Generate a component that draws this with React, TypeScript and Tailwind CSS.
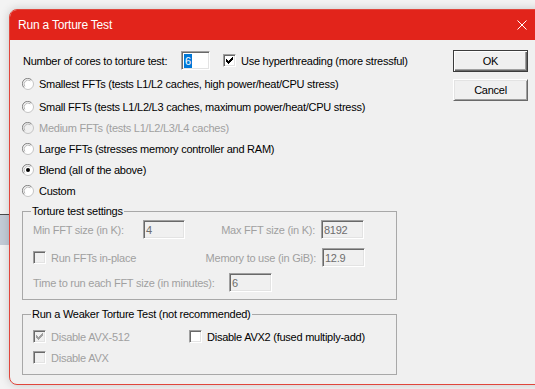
import React from "react";

const CHECK = [
  "......#",
  ".....##",
  "#...###",
  "##.###.",
  "#####..",
  ".###...",
  "..#....",
];

function CheckMark({ color }: { color: string }) {
  const rects: React.ReactNode[] = [];
  CHECK.forEach((row, y) =>
    row.split("").forEach((c, x) => {
      if (c === "#") rects.push(<rect key={`${x}-${y}`} x={x} y={y} width={1} height={1} fill={color} />);
    })
  );
  return (
    <svg width="7" height="7" viewBox="0 0 7 7" shapeRendering="crispEdges">
      {rects}
    </svg>
  );
}

function Checkbox({ checked, disabled }: { checked?: boolean; disabled?: boolean }) {
  return (
    <span
      className={`flex h-[13px] w-[13px] shrink-0 items-center justify-center border border-t-[#a0a0a0] border-l-[#a0a0a0] border-b-white border-r-white shadow-[inset_1px_1px_0_#696969,inset_-1px_-1px_0_#e3e3e3] ${
        disabled ? "bg-[#f0f0f0]" : "bg-white"
      }`}
    >
      {checked && <CheckMark color={disabled ? "#a0a0a0" : "#000"} />}
    </span>
  );
}

function Radio({ checked, disabled }: { checked?: boolean; disabled?: boolean }) {
  return (
    <svg width="12" height="12" viewBox="0 0 12 12" className="shrink-0">
      <circle cx="6" cy="6" r="5.5" fill={disabled ? "#f0f0f0" : "#ffffff"} stroke="#c4c4c4" />
      <path d="M1.9 9.4 A5 5 0 0 1 9.4 1.9" stroke="#8c8c8c" fill="none" strokeWidth="1" />
      <path d="M2.9 8.5 A4 4 0 0 1 8.5 2.9" stroke="#b8b8b8" fill="none" strokeWidth="1" />
      {checked && <circle cx="6" cy="6" r="2" fill="#000" />}
    </svg>
  );
}

function Field({ value, w, disabled, selected }: { value: string; w: string; disabled?: boolean; selected?: boolean }) {
  return (
    <div
      className={`flex h-[19px] ${w} shrink-0 items-center border border-t-[#a0a0a0] border-l-[#a0a0a0] border-b-white border-r-white pl-[2px] shadow-[inset_1px_1px_0_#696969,inset_-1px_-1px_0_#e3e3e3] ${
        disabled ? "bg-[#f0f0f0] text-[#6d6d6d]" : "bg-white text-black"
      }`}
    >
      {selected ? (
        <span className="bg-[#0078d7] px-[1px] pt-[1px] leading-[13px] text-white">{value}</span>
      ) : (
        <span className="pt-[2px] leading-[13px]">{value}</span>
      )}
    </div>
  );
}

function RadioRow({ label, checked, disabled, mt }: { label: string; checked?: boolean; disabled?: boolean; mt?: string }) {
  return (
    <div className={`flex h-[21px] items-center gap-[5px] ${mt ?? ""}`}>
      <Radio checked={checked} disabled={disabled} />
      <span className={`whitespace-nowrap pt-[2px] ${disabled ? "text-[#a0a0a0]" : "text-black"}`}>{label}</span>
    </div>
  );
}

export default function App() {
  return (
    <div className="relative h-[389px] w-[535px] overflow-hidden bg-[#f3f3f3] pl-[9px] pt-[9px] font-['Liberation_Sans',Arial,sans-serif] text-[11px] leading-[13px] tracking-[-0.25px]">
      {/* background window peeking out on the desktop */}
      <div className="absolute left-0 top-[214px] h-[31px] w-[9px] border-t border-[#4a4a4a] bg-[#c3cbd6]" />

      <div className="relative w-[545px] overflow-hidden rounded-[8px] border border-[#e0463c] bg-[#f0f0f0] shadow-[0_0_10px_rgba(0,0,0,0.18)]">
        {/* title bar */}
        <div className="flex h-[30px] items-center justify-between bg-[#e2241b] pl-[8px] pr-[26px] text-white">
          <span className="font-['Liberation_Sans',Arial,sans-serif] text-[12px] tracking-[-0.2px]">Run a Torture Test</span>
          <svg width="10" height="10" viewBox="0 0 10 10">
            <path d="M0.5 0.5 L9.5 9.5 M9.5 0.5 L0.5 9.5" stroke="#ffffff" strokeWidth="1" />
          </svg>
        </div>

        {/* body */}
        <div className="flex h-[344px] pl-[12px]">
          <div className="flex w-[420px] shrink-0 flex-col pt-[11px]">
            <div className="flex h-[19px] items-center">
              <span className="w-[159px] shrink-0 pl-[1px] pt-[2px]">Number of cores to torture test:</span>
              <Field value="6" w="w-[29px]" selected />
              <span className="ml-[13px]">
                <Checkbox checked />
              </span>
              <span className="ml-[5px] whitespace-nowrap pt-[2px]">Use hyperthreading (more stressful)</span>
            </div>

            <RadioRow mt="mt-[3px]" label="Smallest FFTs (tests L1/L2 caches, high power/heat/CPU stress)" />
            <RadioRow mt="mt-[2px]" label="Small FFTs (tests L1/L2/L3 caches, maximum power/heat/CPU stress)" />
            <RadioRow disabled label="Medium FFTs (tests L1/L2/L3/L4 caches)" />
            <RadioRow label="Large FFTs (stresses memory controller and RAM)" />
            <RadioRow checked label="Blend (all of the above)" />
            <RadioRow label="Custom" />

            <fieldset className="mt-[4px] w-[375px] border border-[#a8a8a8] pb-[7px] text-[#a0a0a0]">
              <legend className="ml-[8px] px-[1px] text-black">Torture test settings</legend>
              <div className="mt-[2px] flex h-[19px] items-center pl-[10px]">
                <span className="w-[110px] shrink-0 pt-[2px]">Min FFT size (in K):</span>
                <Field value="4" w="w-[42px]" disabled />
                <span className="w-[130px] shrink-0 pt-[2px] text-right">Max FFT size (in K):</span>
                <span className="ml-[6px]">
                  <Field value="8192" w="w-[43px]" disabled />
                </span>
              </div>
              <div className="mt-[9px] flex h-[19px] items-center pl-[10px]">
                <div className="flex w-[152px] shrink-0 items-center gap-[5px]">
                  <Checkbox disabled />
                  <span className="pt-[2px]">Run FFTs in-place</span>
                </div>
                <span className="w-[131px] shrink-0 pt-[2px] text-right">Memory to use (in GiB):</span>
                <span className="ml-[6px]">
                  <Field value="12.9" w="w-[43px]" disabled />
                </span>
              </div>
              <div className="mt-[6px] flex h-[19px] items-center pl-[10px]">
                <span className="w-[196px] shrink-0 pt-[2px]">Time to run each FFT size (in minutes):</span>
                <Field value="6" w="w-[43px]" disabled />
              </div>
            </fieldset>

            <fieldset className="mt-[8px] w-[375px] border border-[#a8a8a8] pb-[7px]">
              <legend className="ml-[8px] px-[1px] text-black">Run a Weaker Torture Test (not recommended)</legend>
              <div className="mt-[6px] flex h-[19px] items-center pl-[10px]">
                <div className="flex w-[156px] shrink-0 items-center gap-[5px] text-[#a0a0a0]">
                  <Checkbox checked disabled />
                  <span className="pt-[2px]">Disable AVX-512</span>
                </div>
                <div className="flex items-center gap-[5px] text-black">
                  <Checkbox />
                  <span className="whitespace-nowrap pt-[2px]">Disable AVX2 (fused multiply-add)</span>
                </div>
              </div>
              <div className="mt-[2px] flex h-[19px] items-center gap-[5px] pl-[10px] text-[#a0a0a0]">
                <Checkbox disabled />
                <span className="pt-[2px]">Disable AVX</span>
              </div>
            </fieldset>
          </div>

          {/* buttons */}
          <div className="ml-[11px] flex flex-col gap-[7px] pt-[10px]">
            <div className="flex h-[22px] w-[75px] items-center justify-center border border-[#3c3c3c] bg-[#f0f0f0] shadow-[inset_1px_1px_0_#ffffff,inset_-1px_-1px_0_#696969,inset_-2px_-2px_0_#a0a0a0]">
              OK
            </div>
            <div className="flex h-[22px] w-[75px] items-center justify-center border border-t-white border-l-white border-b-[#696969] border-r-[#696969] bg-[#f0f0f0] shadow-[inset_1px_1px_0_#e3e3e3,inset_-1px_-1px_0_#a0a0a0]">
              Cancel
            </div>
          </div>
        </div>
      </div>
    </div>
  );
}
